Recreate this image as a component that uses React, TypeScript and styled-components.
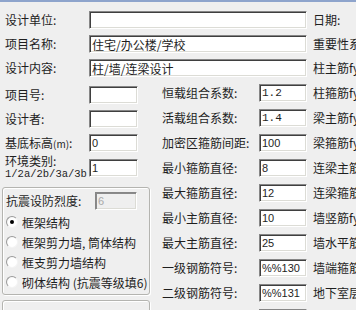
import React from "react";
import styled, { createGlobalStyle, css } from "styled-components";

const GlobalStyle = createGlobalStyle`
  html, body {
    margin: 0;
    padding: 0;
    overflow: hidden;
    background: #efefef;
  }
  body {
    font-family: "Noto Sans CJK SC", "Liberation Sans", sans-serif;
    font-size: 12px;
    color: #1e1e1e;
  }
`;

const Window = styled.div`
  width: 356px;
  height: 310px;
  overflow: hidden;
  background: #efefef;
`;

const TitleEdge = styled.div`
  height: 2px;
  background: #8ea4cc;
`;

const Content = styled.div`
  padding-top: 6px;
`;

const TopRow = styled.div`
  display: grid;
  grid-template-columns: 89px 218px auto;
  align-items: center;
  height: 24px;
`;

const Label = styled.span`
  white-space: nowrap;
  line-height: 14px;
`;

const FirstLabel = styled(Label)`
  padding-left: 5px;
`;

const SideLabel = styled(Label)`
  margin-left: 6px;
`;

const Field = styled.input<{ $mono?: boolean; $latin?: boolean }>`
  box-sizing: border-box;
  height: 18px;
  width: 100%;
  margin: 0;
  padding: 0 2px;
  border: 1px solid;
  border-color: #868686 #ffffff #ffffff #868686;
  box-shadow: inset 1px 1px 0 #3f3f3f, inset -1px -1px 0 #dcdcd6;
  background: #fff;
  color: #1e1e1e;
  font-family: "Noto Sans CJK SC", "Liberation Sans", sans-serif;
  font-size: 12px;
  outline: none;
  ${(p) =>
    p.$mono &&
    css`
      font-family: "Liberation Mono", monospace;
      font-size: 11px;
    `}
  ${(p) =>
    p.$latin &&
    css`
      font-family: "Liberation Sans", sans-serif;
      font-size: 11px;
    `}
  &:disabled {
    background: #efefef;
    color: #a8a8a8;
    box-shadow: inset 1px 1px 0 #8a8a8a, inset -1px -1px 0 #dcdcd6;
  }
`;

const Lower = styled.div`
  display: flex;
`;

const LeftCol = styled.div`
  width: 157px;
  flex: none;
  padding-top: 3px;
`;

const LeftRow = styled.div`
  display: grid;
  grid-template-columns: 84px 49px;
  align-items: center;
  height: 24px;
  padding-left: 5px;
`;

const EnvLabel = styled.span`
  line-height: 11px;
  white-space: nowrap;
`;

const MonoText = styled.span`
  font-family: "Liberation Mono", monospace;
  font-size: 10.5px;
`;

const SmallText = styled.span`
  font-size: 10px;
`;

const GroupBox = styled.div<{ $open?: boolean }>`
  box-sizing: border-box;
  width: 148px;
  margin: ${(p) => (p.$open ? "5px" : "8px")} 0 0 2px;
  padding: 4px 0 2px 3px;
  border: 1px solid #b4b4b0;
  border-radius: 3px;
  box-shadow: inset 1px 1px 0 #fff, 1px 1px 0 #fff;
  ${(p) => p.$open && "height: 40px;"}
`;

const SeismicRow = styled.div`
  display: grid;
  grid-template-columns: 89px 42px;
  align-items: center;
  height: 18px;
`;

const RadioList = styled.div`
  margin-top: 2px;
`;

const RadioRow = styled.label`
  display: flex;
  align-items: center;
  gap: 4px;
  height: 20px;
  white-space: nowrap;
`;

const RadioDot = styled.span<{ $checked?: boolean }>`
  box-sizing: border-box;
  width: 12px;
  height: 12px;
  flex: none;
  border-radius: 50%;
  border: 1px solid;
  border-color: #9a9a9a #f4f4f4 #f4f4f4 #9a9a9a;
  background: radial-gradient(circle at 60% 60%, #fff 55%, #e6e6e6 100%);
  display: flex;
  align-items: center;
  justify-content: center;
  &::after {
    content: "";
    width: 4px;
    height: 4px;
    border-radius: 50%;
    background: ${(p) => (p.$checked ? "#000" : "transparent")};
  }
`;

const MidCol = styled.div`
  flex: 1;
`;

const MidRow = styled.div`
  display: grid;
  grid-template-columns: 97px 48px auto;
  align-items: center;
  height: 25px;
  padding-left: 5px;
`;

const topRows = [
  { label: "设计单位:", value: "", side: "日期:" },
  { label: "项目名称:", value: "住宅/办公楼/学校", side: "重要性系数:" },
  { label: "设计内容:", value: "柱/墙/连梁设计", side: "柱主筋fy:" },
];

const midRows: { label: string; value: string; side: string; mono?: boolean }[] = [
  { label: "恒载组合系数:", value: "1.2", side: "柱箍筋fy:", mono: true },
  { label: "活载组合系数:", value: "1.4", side: "梁主筋fy:", mono: true },
  { label: "加密区箍筋间距:", value: "100", side: "梁箍筋fy:" },
  { label: "最小箍筋直径:", value: "8", side: "连梁主筋fy:" },
  { label: "最大箍筋直径:", value: "12", side: "连梁箍筋fy:" },
  { label: "最小主筋直径:", value: "10", side: "墙竖筋fy:" },
  { label: "最大主筋直径:", value: "25", side: "墙水平筋fy:" },
  { label: "一级钢筋符号:", value: "%%130", side: "墙端箍筋fy:" },
  { label: "二级钢筋符号:", value: "%%131", side: "地下室层数:" },
  { label: "三级钢筋符号:", value: "%%132", side: "" },
];

const radios = [
  "框架结构",
  "框架剪力墙, 筒体结构",
  "框支剪力墙结构",
  "砌体结构 (抗震等级填6)",
];

export default function App() {
  return (
    <Window>
      <GlobalStyle />
      <TitleEdge />
      <Content>
        {topRows.map((r) => (
          <TopRow key={r.label}>
            <FirstLabel>{r.label}</FirstLabel>
            <Field defaultValue={r.value} />
            <SideLabel>{r.side}</SideLabel>
          </TopRow>
        ))}
        <Lower>
          <LeftCol>
            <LeftRow>
              <Label>项目号:</Label>
              <Field defaultValue="" />
            </LeftRow>
            <LeftRow>
              <Label>设计者:</Label>
              <Field defaultValue="" />
            </LeftRow>
            <LeftRow>
              <Label>
                基底标高<SmallText>(m)</SmallText>:
              </Label>
              <Field $latin defaultValue="0" />
            </LeftRow>
            <LeftRow>
              <EnvLabel>
                环境类别:
                <br />
                <MonoText>1/2a/2b/3a/3b</MonoText>
              </EnvLabel>
              <Field $latin defaultValue="1" />
            </LeftRow>
            <GroupBox>
              <SeismicRow>
                <Label>抗震设防烈度:</Label>
                <Field $latin disabled defaultValue="6" />
              </SeismicRow>
              <RadioList>
                {radios.map((t, i) => (
                  <RadioRow key={t}>
                    <RadioDot $checked={i === 0} />
                    {t}
                  </RadioRow>
                ))}
              </RadioList>
            </GroupBox>
            <GroupBox $open />
          </LeftCol>
          <MidCol>
            {midRows.map((r) => (
              <MidRow key={r.label}>
                <Label>{r.label}</Label>
                <Field $mono={r.mono} $latin={!r.mono} defaultValue={r.value} />
                <SideLabel>{r.side}</SideLabel>
              </MidRow>
            ))}
          </MidCol>
        </Lower>
      </Content>
    </Window>
  );
}
